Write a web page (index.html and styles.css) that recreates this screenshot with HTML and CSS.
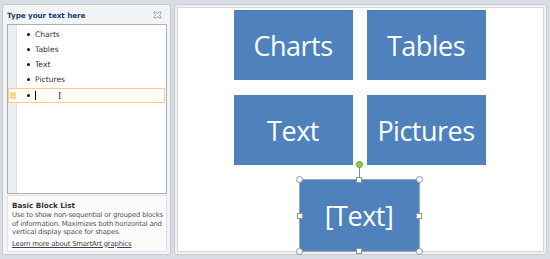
FILE: index.html
```html
<!DOCTYPE html>
<html>
<head>
<meta charset="utf-8">
<link rel="stylesheet" href="styles.css">
</head>
<body>
<div class="app">
  <div class="pane">
    <div class="pane-head">
      <span class="pane-title">Type your text here</span>
      <svg class="close" width="9" height="8" viewBox="0 0 9 8">
        <path d="M1 1h2l1.5 1.5L6 1h2v1L6.5 4 8 6v1H6L4.5 5.5 3 7H1V6l1.5-2L1 2z" fill="none" stroke="#8a9099" stroke-width="0.8"/>
      </svg>
    </div>
    <div class="editor">
      <div class="gutter"></div>
      <ul class="items">
        <li class="item">Charts</li>
        <li class="item">Tables</li>
        <li class="item">Text</li>
        <li class="item">Pictures</li>
        <li class="item current"><span class="caret"></span><span class="ibeam">I</span></li>
      </ul>
    </div>
    <div class="desc">
      <div class="desc-title">Basic Block List</div>
      <p class="desc-text">Use to show non-sequential or grouped blocks of information. Maximizes both horizontal and vertical display space for shapes.</p>
      <a class="desc-link">Learn more about SmartArt graphics</a>
    </div>
  </div>
  <div class="splitter"></div>
  <div class="canvas">
    <div class="grid">
      <div class="block">Charts</div>
      <div class="block">Tables</div>
      <div class="block">Text</div>
      <div class="block">Pictures</div>
    </div>
    <div class="last-row">
      <div class="block selected">[Text]
        <span class="rot-line"></span>
        <span class="rot"></span>
        <span class="h c tl"></span><span class="h c tr"></span>
        <span class="h c bl"></span><span class="h c br"></span>
        <span class="h s tm"></span><span class="h s bm"></span>
        <span class="h s ml"></span><span class="h s mr"></span>
      </div>
    </div>
  </div>
</div>
</body>
</html>
```
FILE: styles.css
```css
* { box-sizing: border-box; }
html, body { margin: 0; padding: 0; }
body {
  width: 550px;
  height: 259px;
  overflow: hidden;
  background: #d9dde3;
  font-family: "DejaVu Sans", Verdana, sans-serif;
}
.app {
  display: flex;
  height: 259px;
  padding: 4px 0 0 2px;
}
.pane {
  width: 169px;
  height: 251px;
  background: #f3f4f6;
  border: 1px solid #c4c9d0;
  border-radius: 3px;
  display: flex;
  flex-direction: column;
  padding: 0 3px 2px 4px;
}
.pane-head {
  height: 19px;
  flex-shrink: 0;
  display: flex;
  align-items: center;
  justify-content: space-between;
  padding: 1px 5px 0 0;
}
.pane-title {
  font-family: "DejaVu Sans", sans-serif;
  font-weight: bold;
  font-size: 7.2px;
  color: #1b3f7a;
  letter-spacing: -0.05px;
}
.close { display: block; }
.editor {
  height: 170px;
  flex-shrink: 0;
  background: #fff;
  border: 1px solid #a9b0b9;
  display: flex;
  position: relative;
}
.gutter {
  width: 9px;
  background: #eceef1;
  border-right: 1px solid #e0e3e7;
}
.items {
  list-style: none;
  margin: 0;
  padding: 2px 0 0 0;
  flex: 1;
}
.item {
  font-family: "DejaVu Sans", sans-serif;
  font-size: 7.6px;
  color: #333;
  height: 15px;
  line-height: 15px;
  padding-left: 18px;
  position: relative;
}
.item::before {
  content: "";
  position: absolute;
  left: 10px;
  top: 6px;
  width: 3px;
  height: 3px;
  border-radius: 50%;
  background: #111;
}
.item.current {
  margin-left: -9px;
  margin-right: 1px;
  padding-left: 26px;
  border: 1px solid #f5cf8a;
  background: #fffdf8;
  height: 15px;
  line-height: 13px;
  margin-top: 1px;
}
.item.current::before { left: 18px; top: 5px; }
.item.current::after {
  content: "";
  position: absolute;
  left: 1px;
  top: 3px;
  width: 6px;
  height: 7px;
  background: #fbd88c;
}
.caret {
  display: inline-block;
  width: 1px;
  height: 9px;
  background: #000;
  vertical-align: middle;
}
.ibeam {
  position: absolute;
  left: 49px;
  top: 0;
  font-family: "Liberation Serif", serif;
  font-size: 10px;
  color: #333;
}
.desc {
  flex: 1;
  padding: 5px 0 0 4px;
  background: #fbfbfc;
  border: 1px solid #dfe2e6;
  margin-top: 1px;
}
.desc-title {
  font-family: "DejaVu Sans", sans-serif;
  font-weight: bold;
  font-size: 7.2px;
  color: #333;
  margin-bottom: 1px;
}
.desc-text {
  margin: 0;
  font-family: "DejaVu Sans", sans-serif;
  font-size: 6.9px;
  line-height: 8.5px;
  color: #555;
  letter-spacing: -0.2px;
}
.desc-link {
  display: block;
  margin-top: 3px;
  font-family: "DejaVu Sans", sans-serif;
  font-size: 6.9px;
  color: #444;
  text-decoration: underline;
  letter-spacing: -0.2px;
}
.splitter {
  width: 3px;
}
.canvas {
  width: 373px;
  height: 251px;
  background: #fff;
  border: 1px solid #c9ccd0;
  box-shadow: inset 0 0 0 2px #f0f1f3, inset 0 0 0 3px #d6d8db;
  border-radius: 3px;
  padding: 5px 0 0 0;
  display: flex;
  flex-direction: column;
  align-items: center;
}
.grid {
  display: grid;
  grid-template-columns: 119px 119px;
  grid-template-rows: 70px 70px;
  column-gap: 14px;
  row-gap: 15px;
  margin-left: -2px;
}
.block {
  background: #4f81bd;
  color: #fff;
  font-family: "Open Sans", sans-serif;
  font-size: 27px;
  display: flex;
  align-items: center;
  justify-content: center;
  letter-spacing: -0.5px;
}
.last-row {
  margin-top: 14px;
  margin-left: -3px;
}
.selected {
  width: 121px;
  height: 73px;
  position: relative;
  border: 1px solid #9aa7b6;
}
.rot-line {
  position: absolute;
  left: 59px;
  top: -14px;
  width: 1px;
  height: 14px;
  background: #7f8c99;
}
.rot {
  position: absolute;
  left: 56px;
  top: -19px;
  width: 7px;
  height: 7px;
  border-radius: 50%;
  background: #8fd04f;
  border: 1px solid #5f9a33;
}
.h {
  position: absolute;
  background: #fff;
  border: 1px solid #8b96a3;
}
.c { width: 7px; height: 7px; border-radius: 50%; }
.s { width: 6px; height: 6px; }
.tl { left: -4px; top: -4px; }
.tr { right: -4px; top: -4px; }
.bl { left: -4px; bottom: -4px; }
.br { right: -4px; bottom: -4px; }
.tm { left: 56px; top: -3px; }
.bm { left: 56px; bottom: -3px; }
.ml { left: -3px; top: 33px; }
.mr { right: -3px; top: 33px; }
```
